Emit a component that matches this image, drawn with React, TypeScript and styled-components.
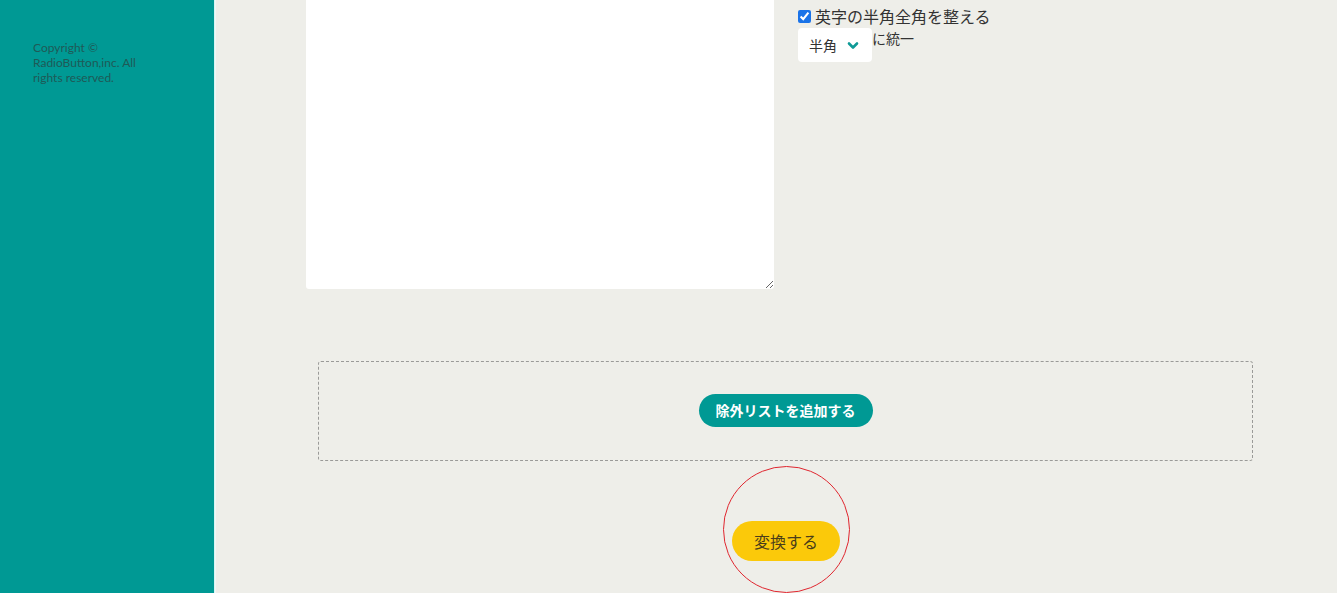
import React from "react";
import styled, { createGlobalStyle } from "styled-components";

const Global = createGlobalStyle`
  html, body { margin: 0; padding: 0; height: 100%; overflow: hidden; }
  body { background: #eeeee9; font-family: "Noto Sans CJK JP", "Noto Sans", sans-serif; }
  #root { height: 100%; }
`;

const Page = styled.div`
  display: flex;
  width: 1337px;
  height: 593px;
  overflow: hidden;
`;

const Sidebar = styled.aside`
  width: 214px;
  flex: none;
  background: #009994;
  box-shadow: 1px 0 0 #d8f4f2, 2px 0 0 #eef8f6;
  padding: 40px 0 0 33px;
  box-sizing: border-box;
`;

const Copyright = styled.p`
  margin: 0;
  width: 132px;
  font-family: "Lato", "Open Sans", sans-serif;
  font-size: 12px;
  line-height: 15px;
  color: #1f5a57;
`;

const Main = styled.main`
  flex: 1;
  display: flex;
  flex-direction: column;
  padding-left: 92px;
  box-sizing: border-box;
`;

const EditorRow = styled.div`
  display: flex;
  gap: 24px;
  align-items: flex-start;
`;

const TextArea = styled.textarea`
  width: 468px;
  height: 289px;
  box-sizing: border-box;
  border: none;
  border-radius: 0 0 3px 3px;
  background: #fff;
  resize: both;
  outline: none;
  margin: 0;
  display: block;
`;

const Options = styled.div`
  display: flex;
  flex-direction: column;
  padding-top: 5px;
`;

const CheckRow = styled.label`
  display: flex;
  align-items: center;
  gap: 4px;
  font-size: 16px;
  line-height: 22px;
  color: #333;
`;

const Check = styled.input`
  width: 13px;
  height: 13px;
  margin: 0;
  accent-color: #1a73e8;
`;

const UnifyRow = styled.div`
  display: flex;
  align-items: flex-start;
  margin-top: 1px;
`;

const SelectBox = styled.div`
  width: 74px;
  height: 34px;
  box-sizing: border-box;
  background: #fff;
  border-radius: 4px;
  display: flex;
  align-items: center;
  padding: 0 13px 0 11px;
  justify-content: space-between;
  font-size: 14px;
  color: #333;
`;

const UnifyText = styled.span`
  font-size: 14px;
  line-height: 18px;
  color: #333;
  padding-top: 1px;
`;

const ExcludeBox = styled.div`
  margin: 72px 84px 0 12px;
  height: 100px;
  box-sizing: border-box;
  border: 1px dashed #9a9a98;
  border-radius: 3px;
  display: flex;
  align-items: center;
  justify-content: center;
  padding-bottom: 2px;
`;

const TealButton = styled.button`
  height: 33px;
  padding: 0 17px;
  border: none;
  border-radius: 17px;
  background: #009994;
  color: #fff;
  font-family: inherit;
  font-weight: 700;
  font-size: 14px;
  cursor: pointer;
`;

const ConvertArea = styled.div`
  display: flex;
  justify-content: center;
  margin: 5px 84px 0 12px;
`;

const Ring = styled.div`
  width: 127px;
  height: 127px;
  box-sizing: border-box;
  border: 1px solid #e0262f;
  border-radius: 50%;
  display: flex;
  align-items: center;
  justify-content: center;
  padding-top: 22px;
  margin-left: 1px;
`;

const YellowButton = styled.button`
  width: 108px;
  height: 40px;
  border: none;
  border-radius: 20px;
  background: #fbc90a;
  color: #4a3d1a;
  font-family: inherit;
  font-size: 16px;
  cursor: pointer;
`;

export default function App() {
  return (
    <Page>
      <Global />
      <Sidebar>
        <Copyright>Copyright © RadioButton,inc. All rights reserved.</Copyright>
      </Sidebar>
      <Main>
        <EditorRow>
          <TextArea />
          <Options>
            <CheckRow>
              <Check type="checkbox" defaultChecked />
              英字の半角全角を整える
            </CheckRow>
            <UnifyRow>
              <SelectBox>
                <span>半角</span>
                <svg width="12" height="9" viewBox="0 0 12 9">
                  <path d="M2 2.5 L6 6.5 L10 2.5" fill="none" stroke="#0f9a97" strokeWidth="2.6" strokeLinecap="round" strokeLinejoin="round" />
                </svg>
              </SelectBox>
              <UnifyText>に統一</UnifyText>
            </UnifyRow>
          </Options>
        </EditorRow>
        <ExcludeBox>
          <TealButton>除外リストを追加する</TealButton>
        </ExcludeBox>
        <ConvertArea>
          <Ring>
            <YellowButton>変換する</YellowButton>
          </Ring>
        </ConvertArea>
      </Main>
    </Page>
  );
}
